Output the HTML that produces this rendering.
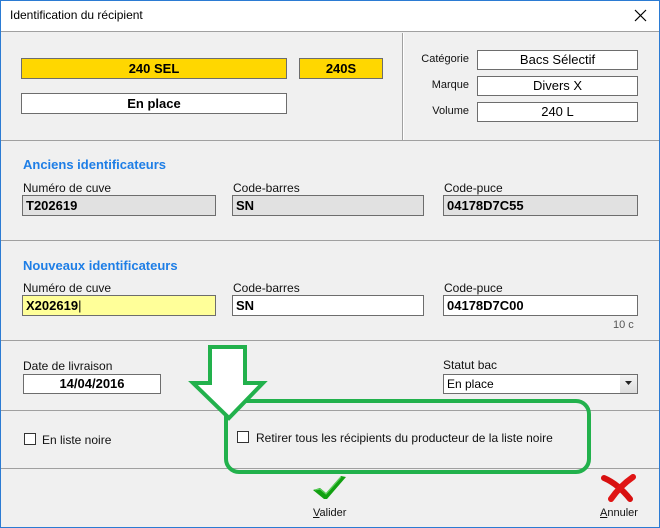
<!DOCTYPE html>
<html><head><meta charset="utf-8"><style>
*{margin:0;padding:0;box-sizing:border-box}
body{width:660px;height:528px;overflow:hidden;background:#f0f0f0;font-family:"Liberation Sans",sans-serif;font-size:12px;color:#000;position:relative}
.a{position:absolute}
.win{left:0;top:0;width:660px;height:528px;border:1px solid #2b7bd3;border-top:1px solid #2b7bd3}
.title{left:1px;top:1px;width:658px;height:31px;background:#fff;border-bottom:1px solid #a0a0a0}
.hl{height:1px;background:#a0a0a0;left:1px;width:658px}
.f{border:1px solid #6d6d6d;background:#fff;height:21px;line-height:19px;font-weight:bold;padding-left:3px;font-size:13px}
.g{background:#e1e1e1}
.lbl{font-size:12px;color:#111}
.h{color:#1e7ee6;font-weight:bold;font-size:13px}
.c{text-align:center;padding:0}
.cb{width:12px;height:12px;border:1px solid #333;background:#fff}
</style></head><body>
<div class="a title"></div>
<div class="a" style="left:10px;top:8px;font-size:12px">Identification du récipient</div>
<svg class="a" style="left:634px;top:9px" width="13" height="13"><path d="M1 1L12 12M12 1L1 12" stroke="#000" stroke-width="1.2"/></svg>

<div class="a f c" style="left:21px;top:58px;width:266px;background:#ffd700">240 SEL</div>
<div class="a f c" style="left:299px;top:58px;width:84px;background:#ffd700">240S</div>
<div class="a f c" style="left:21px;top:93px;width:266px">En place</div>
<div class="a" style="left:402px;top:33px;width:1px;height:107px;background:#a0a0a0"></div>
<div class="a" style="left:403px;top:33px;width:1px;height:107px;background:#fff"></div>
<div class="a lbl" style="left:420px;top:53px;width:49px;text-align:right;font-size:11px">Catégorie</div>
<div class="a lbl" style="left:420px;top:79px;width:49px;text-align:right;font-size:11px">Marque</div>
<div class="a lbl" style="left:420px;top:105px;width:49px;text-align:right;font-size:11px">Volume</div>
<div class="a f c" style="left:477px;top:50px;width:161px;height:20px;line-height:18px;font-weight:normal">Bacs Sélectif</div>
<div class="a f c" style="left:477px;top:76px;width:161px;height:20px;line-height:18px;font-weight:normal">Divers X</div>
<div class="a f c" style="left:477px;top:102px;width:161px;height:20px;line-height:18px;font-weight:normal">240 L</div>

<div class="a hl" style="top:140px"></div>
<div class="a h" style="left:23px;top:157px">Anciens identificateurs</div>
<div class="a lbl" style="left:23px;top:181px">Numéro de cuve</div>
<div class="a lbl" style="left:233px;top:181px">Code-barres</div>
<div class="a lbl" style="left:444px;top:181px">Code-puce</div>
<div class="a f g" style="left:22px;top:195px;width:194px">T202619</div>
<div class="a f g" style="left:232px;top:195px;width:192px">SN</div>
<div class="a f g" style="left:443px;top:195px;width:195px">04178D7C55</div>

<div class="a hl" style="top:240px"></div>
<div class="a h" style="left:23px;top:258px">Nouveaux identificateurs</div>
<div class="a lbl" style="left:23px;top:281px">Numéro de cuve</div>
<div class="a lbl" style="left:233px;top:281px">Code-barres</div>
<div class="a lbl" style="left:444px;top:281px">Code-puce</div>
<div class="a f" style="left:22px;top:295px;width:194px;background:#ffff99">X202619<span style="font-weight:normal">|</span></div>
<div class="a f" style="left:232px;top:295px;width:192px">SN</div>
<div class="a f" style="left:443px;top:295px;width:195px">04178D7C00</div>
<div class="a" style="left:613px;top:319px;color:#555;font-size:11px">10 c</div>

<div class="a hl" style="top:340px"></div>
<div class="a lbl" style="left:23px;top:359px">Date de livraison</div>
<div class="a f c" style="left:23px;top:374px;width:138px;height:20px;line-height:18px">14/04/2016</div>
<div class="a lbl" style="left:443px;top:358px">Statut bac</div>
<div class="a f" style="left:443px;top:374px;width:195px;height:20px;line-height:18px;font-weight:normal;font-size:12px">En place</div>
<div class="a" style="left:620px;top:375px;width:17px;height:18px;background:linear-gradient(#f4f4f4,#dcdcdc)"></div>
<svg class="a" style="left:625px;top:381px" width="7" height="5"><path d="M0 0H7L3.5 4Z" fill="#222"/></svg>

<div class="a hl" style="top:410px"></div>
<div class="a cb" style="left:24px;top:433px"></div>
<div class="a lbl" style="left:42px;top:433px">En liste noire</div>
<div class="a cb" style="left:237px;top:431px"></div>
<div class="a lbl" style="left:256px;top:431px">Retirer tous les récipients du producteur de la liste noire</div>

<div class="a hl" style="top:468px"></div>
<div class="a" style="left:224px;top:399px;width:367px;height:75px;border:4px solid #22b14c;border-radius:15px"></div>
<svg class="a" style="left:188px;top:345px" width="80" height="78"><path d="M22 2H57V38H75L41 73L5 38H22Z" fill="#fff" stroke="#22b14c" stroke-width="4" stroke-linejoin="miter"/></svg>

<svg class="a" style="left:312px;top:476px" width="36" height="24"><path d="M1 14L8 12L14 17L29 0L34 1L15 23L12 23Z" fill="#12a012"/><path d="M3 14L8 13L14 18L29 1" fill="none" stroke="#5fd35f" stroke-width="1"/></svg>
<svg class="a" style="left:600px;top:474px" width="38" height="28"><path d="M4 4Q18 10 30 25" fill="none" stroke="#d81010" stroke-width="6" stroke-linecap="round"/><path d="M33 3Q20 12 11 25" fill="none" stroke="#e01515" stroke-width="6" stroke-linecap="round"/></svg>
<div class="a lbl" style="left:313px;top:507px;font-size:11px"><u>V</u>alider</div>
<div class="a lbl" style="left:600px;top:507px;font-size:11px"><u>A</u>nnuler</div>
<div class="a win"></div>
</body></html>
